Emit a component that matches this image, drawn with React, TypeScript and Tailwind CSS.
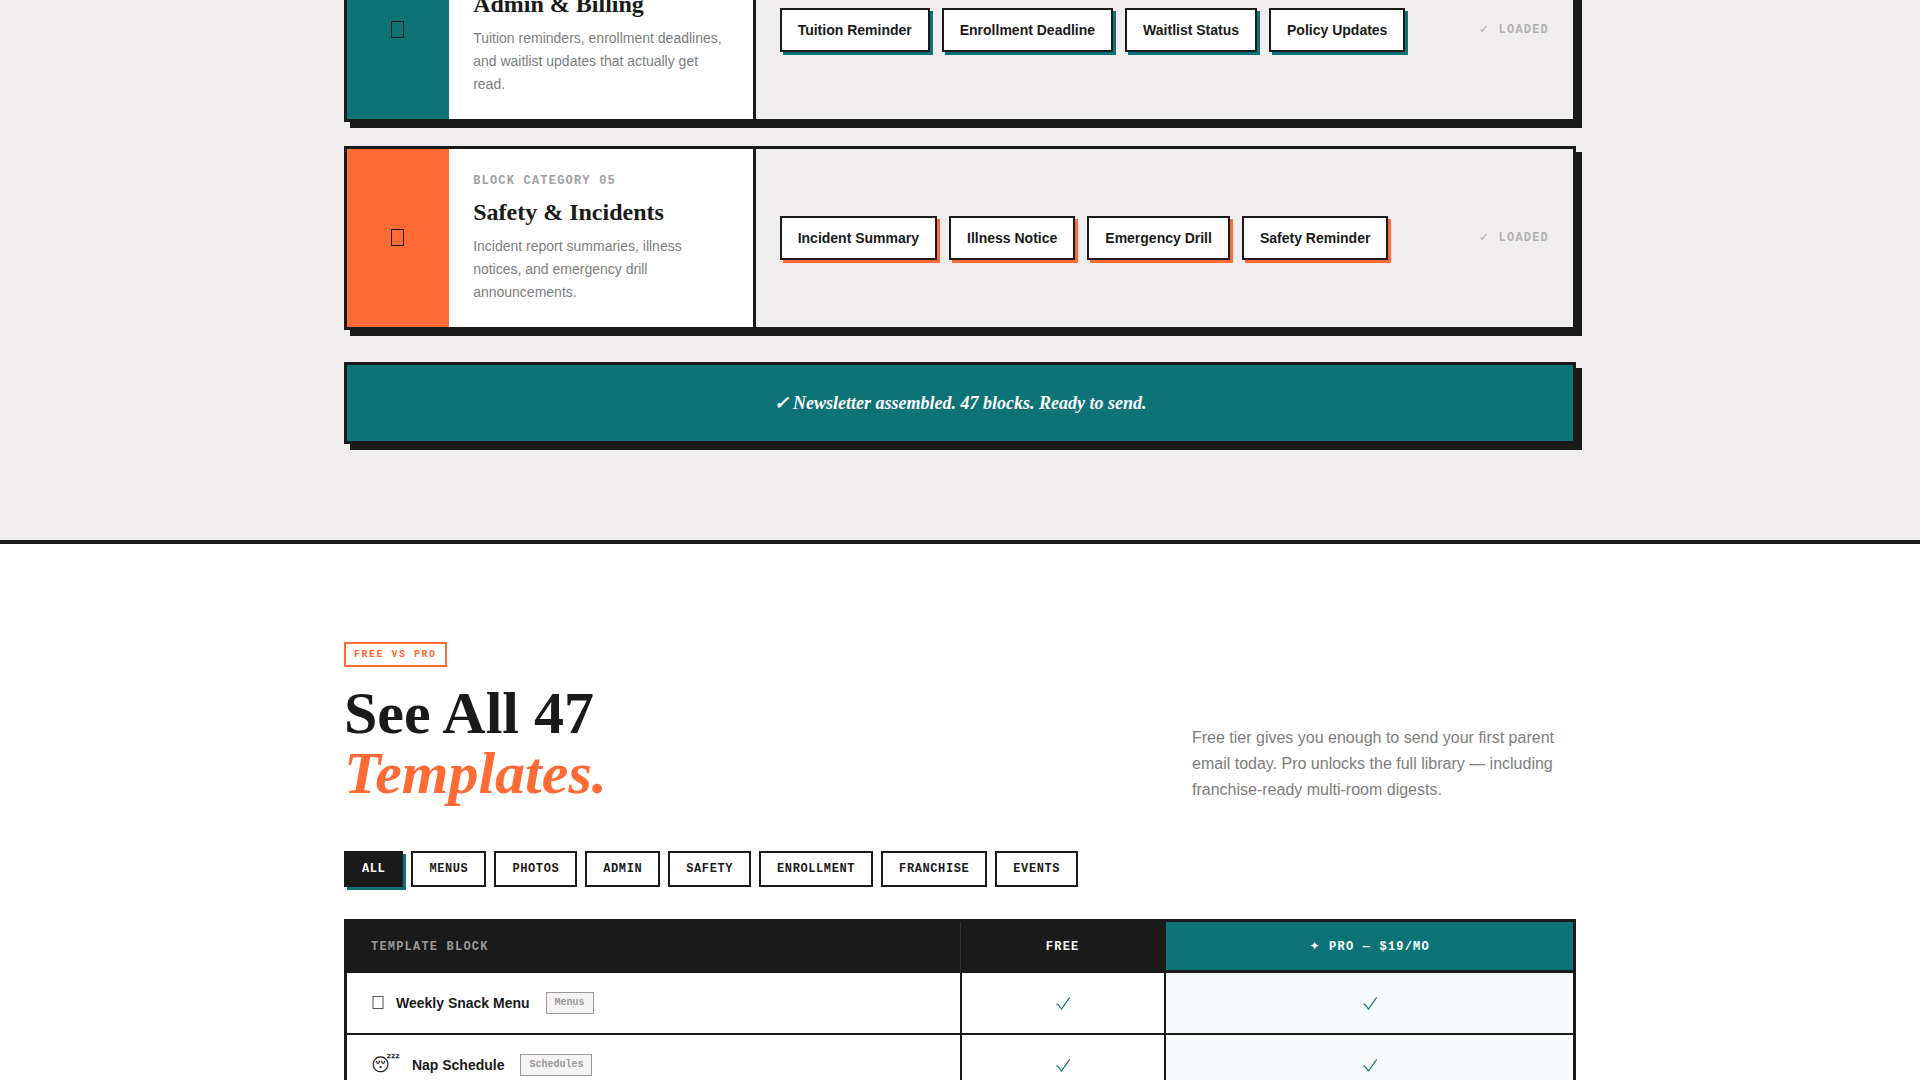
import { useState } from "react";
import clsx from "clsx";

const categories = [
  {
    number: "04",
    title: "Admin & Billing",
    description:
      "Tuition reminders, enrollment deadlines, and waitlist updates that actually get read.",
    blocks: ["Tuition Reminder", "Enrollment Deadline", "Waitlist Status", "Policy Updates"],
    iconBg: "bg-[#0d7377]",
    chipShadow: "shadow-[3px_3px_0_#0d7377]",
  },
  {
    number: "05",
    title: "Safety & Incidents",
    description: "Incident report summaries, illness notices, and emergency drill announcements.",
    blocks: ["Incident Summary", "Illness Notice", "Emergency Drill", "Safety Reminder"],
    iconBg: "bg-[#ff6b35]",
    chipShadow: "shadow-[3px_3px_0_#ff6b35]",
  },
];

const filters = ["All", "Menus", "Photos", "Admin", "Safety", "Enrollment", "Franchise", "Events"];

const templates = [
  { icon: null, name: "Weekly Snack Menu", tag: "Menus" },
  { icon: "😴", name: "Nap Schedule", tag: "Schedules" },
];

const BoxIcon = () => (
  <svg width="14" height="18" fill="none" stroke="currentColor" aria-hidden="true">
    <rect x="0.5" y="0.5" width="12" height="16" />
  </svg>
);

const SmallBoxIcon = () => (
  <svg width="13" height="14" fill="none" stroke="#555555" aria-hidden="true">
    <rect x="2" y="0.5" width="10" height="12" />
  </svg>
);

const CheckIcon = () => (
  <svg
    viewBox="0 0 14 13"
    fill="none"
    stroke="currentColor"
    strokeWidth="1.2"
    className="mx-auto h-[13px] w-[14px] text-[#0d7377]"
    role="img"
    aria-label="Included"
  >
    <path d="M0.3 6.7 L2 7.4 L5.5 12 L13.7 0.4" />
  </svg>
);

const CategoryCard = ({ category }: { category: (typeof categories)[number] }) => (
  <article className="grid grid-cols-12 border-3 border-[#1a1a1a] shadow-[6px_6px_0_#1a1a1a]">
    <div className={clsx("col-span-1 flex items-center justify-center", category.iconBg)}>
      <BoxIcon />
    </div>
    <div className="col-span-3 border-r-3 border-[#1a1a1a] bg-white px-6 pt-6 pb-[23px]">
      <p className="mb-2 font-['Liberation_Mono','DejaVu_Sans',monospace] text-xs font-bold tracking-widest text-[#a0a0a0] uppercase">
        Block Category {category.number}
      </p>
      <h3 className="mb-2 font-['Liberation_Serif',serif] text-2xl leading-tight font-bold">
        {category.title}
      </h3>
      <p className="text-sm leading-[23px] text-[#7d7d7d]">{category.description}</p>
    </div>
    <div className="col-span-8 flex items-center justify-between bg-[#f0edee] p-6">
      <div className="flex flex-wrap gap-3">
        {category.blocks.map((block) => (
          <span
            key={block}
            className={clsx(
              "border-2 border-[#1a1a1a] bg-white px-4 py-2.5 text-sm font-bold",
              category.chipShadow
            )}
          >
            {block}
          </span>
        ))}
      </div>
      <span className="font-['Liberation_Mono','DejaVu_Sans',monospace] text-xs font-bold tracking-widest text-[#b3b1b2] uppercase">
        ✓ Loaded
      </span>
    </div>
  </article>
);

const TemplateTable = () => (
  <div className="border-3 border-[#1a1a1a]">
    <table className="w-full table-fixed border-separate border-spacing-0">
      <thead className="bg-[#1a1a1a] font-['Liberation_Mono','DejaVu_Sans',monospace] text-xs tracking-widest text-white uppercase">
        <tr>
          <th className="w-1/2 border-b-3 border-[#1a1a1a] px-6 pt-[17px] pb-[15px] text-left text-[#999999]">
            Template Block
          </th>
          <th className="w-1/6 border-b-3 border-l border-b-[#1a1a1a] border-l-[#333333] px-6 pt-[17px] pb-[15px]">
            Free
          </th>
          <th className="w-1/3 border-b-3 border-l-2 border-[#1a1a1a] bg-[#0d7377] px-6 pt-[17px] pb-[15px]">
            ✦ Pro — $19/mo
          </th>
        </tr>
      </thead>
      <tbody>
        {templates.map((template) => (
          <tr key={template.name}>
            <td className="border-b-2 border-[#1a1a1a] px-6 py-4">
              <div className="flex h-7 items-center">
                <span className="mr-3 font-['DejaVu_Sans',sans-serif] text-lg">
                  {template.icon ?? <SmallBoxIcon />}
                </span>
                <span className="mr-4 text-sm font-bold">{template.name}</span>
                <span className="border border-[#999999] bg-[#f5f3f4] px-2 py-0.5 font-['Liberation_Mono',monospace] text-[10px] leading-4 font-bold text-[#999999]">
                  {template.tag}
                </span>
              </div>
            </td>
            <td className="border-b-2 border-l-2 border-[#1a1a1a]">
              <CheckIcon />
            </td>
            <td className="border-b-2 border-l-2 border-[#1a1a1a] bg-[#f6fafb]">
              <CheckIcon />
            </td>
          </tr>
        ))}
      </tbody>
    </table>
  </div>
);

const App = () => {
  const [activeFilter, setActiveFilter] = useState("All");

  return (
    <main className="h-screen overflow-hidden bg-white font-['Liberation_Sans',sans-serif] text-[#1a1a1a]">
      <section className="border-b-4 border-[#1a1a1a] bg-[#f0edee] pb-24">
        <div className="mx-auto max-w-7xl px-6">
          {/* the list runs off the top edge of the window */}
          <div className="-mt-[62px] mb-8 flex flex-col gap-6">
            {categories.map((category) => (
              <CategoryCard key={category.number} category={category} />
            ))}
          </div>
          <div className="border-3 border-[#1a1a1a] bg-[#0d7377] py-6 text-center font-['Liberation_Serif',serif] text-lg font-bold text-white italic shadow-[6px_6px_0_#1a1a1a]">
            ✓ Newsletter assembled. 47 blocks. Ready to send.
          </div>
        </div>
      </section>

      <section className="pt-[98px] pb-24">
        <div className="mx-auto max-w-7xl px-6">
          <div className="mb-12 flex items-end justify-between">
            <div>
              <span className="mb-4 block w-fit border-2 border-[#ff6b35] px-2 py-[3px] font-['Liberation_Mono',monospace] text-[10px] leading-[15px] font-bold tracking-[0.15em] text-[#ff6b35] uppercase">
                Free vs Pro
              </span>
              <h2 className="font-['Liberation_Serif',serif] text-6xl leading-none font-bold">
                See All 47
                <br />
                <em className="text-[#ff6b35]">Templates.</em>
              </h2>
            </div>
            <p className="max-w-sm text-base leading-relaxed text-[#7d7d7d]">
              Free tier gives you enough to send your first parent email today. Pro unlocks the full
              library — including franchise-ready multi-room digests.
            </p>
          </div>

          <div className="mb-8 flex flex-wrap gap-2">
            {filters.map((filter) => (
              <button
                key={filter}
                type="button"
                onClick={() => setActiveFilter(filter)}
                className={clsx(
                  "border-2 border-[#1a1a1a] px-4 py-2 font-['Liberation_Mono',monospace] text-xs font-bold tracking-wider uppercase",
                  filter === activeFilter
                    ? "bg-[#1a1a1a] text-white shadow-[3px_3px_0_#0d7377]"
                    : "bg-white"
                )}
              >
                {filter}
              </button>
            ))}
          </div>

          <TemplateTable />
        </div>
      </section>
    </main>
  );
};

export default App;
